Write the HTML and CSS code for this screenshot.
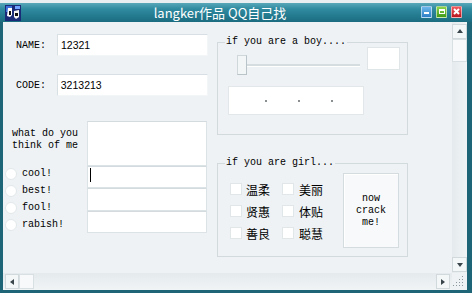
FILE: index.html
```html
<!DOCTYPE html>
<html>
<head>
<meta charset="utf-8">
<title>langker作品 QQ自己找</title>
<link rel="stylesheet" href="styles.css">
</head>
<body>
<div class="win">
  <div class="titlebar">
    <svg class="appicon" width="16" height="16" viewBox="0 0 16 16">
      <rect width="16" height="16" fill="#1a2b78"/>
      <rect x="1" y="1" width="6" height="6" fill="#3d6fd8"/>
      <path d="M3 3 L7 3 L7 10 L5 12 L2 11 Z" fill="#fff"/>
      <path d="M9 6 L14 5 L14 12 L11 14 L9 12 Z" fill="#f4f4f4"/>
      <path d="M4 6 L6 6 L6 10 L4 10 Z M10 8 L13 8 L13 11 L10 11 Z" fill="#111"/>
      <rect x="10" y="1" width="5" height="3" fill="#6fa3ff"/>
    </svg>
    <span class="title">langker作品 QQ自己找</span>
    <div class="wbtns">
      <span class="wb wb-min"><i></i></span>
      <span class="wb wb-max"><i></i></span>
      <span class="wb wb-close">
        <svg width="7" height="7" viewBox="0 0 7 7"><path d="M1 1 L6 6 M6 1 L1 6" stroke="#fff" stroke-width="2"/></svg>
      </span>
    </div>
  </div>

  <div class="frame">
    <div class="client">
      <div class="form">

        <div class="left">
          <div class="field field-name">
            <span class="lbl">NAME:</span>
            <div class="txt txt-name">12321</div>
          </div>
          <div class="field field-code">
            <span class="lbl">CODE:</span>
            <div class="txt txt-code">3213213</div>
          </div>

          <div class="lower">
            <div class="opts">
              <div class="ask">what do you<br>think of me</div>
              <div class="radio"><span class="dot"></span>cool!</div>
              <div class="radio"><span class="dot"></span>best!</div>
              <div class="radio"><span class="dot"></span>fool!</div>
              <div class="radio"><span class="dot"></span>rabish!</div>
            </div>
            <div class="boxes">
              <div class="box box-big"></div>
              <div class="box"><span class="caret"></span></div>
              <div class="box box-mid"></div>
              <div class="box"></div>
            </div>
          </div>
        </div>

        <div class="right">
          <div class="group group-boy">
            <span class="legend">if you are a boy....</span>
            <div class="boy-row">
              <div class="slider">
                <span class="thumb"></span>
                <span class="track"></span>
              </div>
              <div class="smallbox"></div>
            </div>
            <div class="display">
              <span class="pt"></span><span class="pt"></span><span class="pt"></span>
            </div>
          </div>

          <div class="group group-girl">
            <span class="legend">if you are girl...</span>
            <div class="girl-row">
              <div class="checks">
                <div class="chk"><span class="sq"></span>温柔</div>
                <div class="chk"><span class="sq"></span>美丽</div>
                <div class="chk"><span class="sq"></span>贤惠</div>
                <div class="chk"><span class="sq"></span>体贴</div>
                <div class="chk"><span class="sq"></span>善良</div>
                <div class="chk"><span class="sq"></span>聪慧</div>
              </div>
              <div class="crack">now<br>crack<br>me!</div>
            </div>
          </div>
        </div>

      </div>

      <div class="vscroll">
        <span class="sbtn"><i class="arr arr-up"></i></span>
        <span class="vthumb"></span>
        <span class="sbtn sbtn-down"><i class="arr arr-down"></i></span>
      </div>
      <div class="hscroll">
        <span class="sbtn"><i class="arr arr-left"></i></span>
        <span class="hthumb"></span>
        <span class="sbtn sbtn-right"><i class="arr arr-right"></i></span>
      </div>
      <div class="grip">
        <svg width="12" height="12" viewBox="0 0 12 12" fill="#8b979c">
          <rect x="9" y="1" width="1" height="1"/>
          <rect x="6" y="4" width="1" height="1"/><rect x="9" y="4" width="1" height="1"/>
          <rect x="3" y="7" width="1" height="1"/><rect x="6" y="7" width="1" height="1"/><rect x="9" y="7" width="1" height="1"/>
          <rect x="0" y="10" width="1" height="1"/><rect x="3" y="10" width="1" height="1"/><rect x="6" y="10" width="1" height="1"/><rect x="9" y="10" width="1" height="1"/>
        </svg>
      </div>
    </div>
  </div>
</div>
</body>
</html>
```

FILE: styles.css
```css
*{ margin:0; padding:0; box-sizing:border-box;}
body{ background:#eef2f4; font-family:"Liberation Mono", monospace; font-size:10px; color:#000;}

.win{ width:472px; height:293px; display:flex; flex-direction:column; overflow:hidden;}

/* title bar */
.titlebar{ height:22px; display:flex; align-items:center; padding:3px 10px 0 5px;
  background:linear-gradient(to bottom, #e9eef0 0, #e9eef0 3px, #58a7b8 3px, #2f8aa0 9px, #237a8f 16px, #1c6c80 22px);}
.appicon{ display:block; flex:none;}
.title{ flex:1; text-align:center; color:#fff; font-family:"Noto Sans CJK SC", sans-serif; font-size:13px; line-height:16px; padding-right:2px;}
.wbtns{ display:flex; gap:4px; margin-top:-2px;}
.wb{ width:11px; height:12px; display:flex; align-items:center; justify-content:center; border:1px solid rgba(255,255,255,.55); border-radius:1px;}
.wb-min{ background:linear-gradient(#6cb7ea, #2d7fc6);}
.wb-min i{ width:5px; height:2px; background:#fff; margin-top:3px;}
.wb-max{ background:linear-gradient(#8ed44c, #3f9a18);}
.wb-max i{ width:6px; height:5px; border:1px solid #fff; border-top-width:2px;}
.wb-close{ background:linear-gradient(#ef5a5f, #b8161e);}
.wb-close svg{ display:block;}

/* window frame */
.frame{ flex:1; background:#1d6577; padding:0 5px 3px 3px; display:flex;}
.client{ flex:1; background:#eef2f4; display:grid; grid-template-columns:1fr 15px; grid-template-rows:1fr 17px;}

.form{ display:flex;}

/* left column */
.left{ width:205px; display:flex; flex-direction:column;}
.field{ display:flex; align-items:center; padding-left:13px;}
.field-name{ margin-top:12px;}
.field-code{ margin-top:18px;}
.lbl{ width:41px;}
.txt{ height:22px; background:#fff; border:1px solid #d9e0e3; border-right-color:#f3f6f7; border-bottom-color:#f3f6f7;
  font-family:"Liberation Sans", sans-serif; font-size:10.5px; line-height:20px; padding-left:3px;}
.txt-name{ width:151px;}
.txt-code{ width:152px;}

.lower{ margin-top:25px; display:flex;}
.opts{ width:84px;}
.ask{ margin-top:7px; padding-left:9px; line-height:12px;}
.radio{ height:17px; display:flex; align-items:center;}
.ask + .radio{ margin-top:13px;}
.dot{ width:12px; height:12px; border-radius:50%; background:#fff; border:1px solid #e2e8ea; margin:0 5px 0 2px;}

.boxes{ width:120px; display:flex; flex-direction:column;}
.box{ height:22px; background:#fff; border:1px solid #dce3e6; border-top-color:#d3dbdf; position:relative;}
.box-big{ height:45px;}
.box-mid{ height:23px;}
.caret{ position:absolute; left:2px; top:1px; width:1px; height:14px; background:#000;}

/* right column */
.right{ width:191px; margin-left:9px;}
.group{ border:1px solid #d3dadd; display:flex; flex-direction:column; align-items:flex-start;}
.legend{ margin:-7px 0 0 7px; padding:0 1px; line-height:12px; background:#eef2f4;}
.group-boy{ margin-top:20px; height:93px;}
.group-girl{ margin-top:28px; height:94px;}

.boy-row{ display:flex; margin-top:-1px;}
.slider{ display:flex; align-items:center; margin:8px 0 0 19px; height:20px;}
.thumb{ width:10px; height:20px; background:#f3f6f7; border:1px solid #cfd7db; border-right-color:#b9c4c9; border-bottom-color:#b9c4c9;}
.track{ width:113px; height:3px; background:#d6dde0; border-bottom:1px solid #fff;}
.smallbox{ width:33px; height:23px; margin-left:7px; background:#fff; border:1px solid #e0e6e8;}
.display{ width:136px; height:29px; margin:11px 0 0 10px; background:#fff; border:1px solid #e2e8ea;
  display:flex; align-items:center; padding-left:36px; gap:31px;}
.pt{ width:2px; height:2px; background:#8a8f92;}

.girl-row{ display:flex; width:100%;}
.checks{ margin:9px 0 0 12px; display:grid; grid-template-columns:52px auto; grid-auto-rows:22px;}
.chk{ display:flex; align-items:center; font-family:"Noto Sans CJK SC", sans-serif; font-size:12px;}
.sq{ width:12px; height:12px; background:#fff; border:1px solid #e1e7e9; margin-right:4px;}
.chk:nth-child(2n) .sq{ margin-right:5px;}
.crack{ margin:4px 8px 0 auto; width:56px; height:75px; background:#f7f9fa; border:1px solid #d5dcdf;
  box-shadow:inset 1px 1px 0 #fff; display:flex; align-items:center; justify-content:center; text-align:center; line-height:12px;}

/* scrollbars */
.vscroll{ background:linear-gradient(to right, #e4eaed, #f1f4f5); display:flex; flex-direction:column; padding-top:2px;}
.hscroll{ background:linear-gradient(to bottom, #e4eaed, #f1f4f5); display:flex; align-items:center; padding-left:2px;}
.sbtn{ width:15px; height:15px; background:#f4f7f8; border:1px solid #d1d9dc; display:flex; align-items:center; justify-content:center;}
.hscroll .sbtn{ width:14px;}
.sbtn-down{ margin-top:auto; margin-bottom:1px;}
.sbtn-right{ margin-left:auto; margin-right:2px;}
.vthumb{ height:23px; background:#f7f9fa; border:1px solid #d9e0e3;}
.hthumb{ width:15px; height:15px; background:#f7f9fa; border:1px solid #d9e0e3;}
.arr{ width:0; height:0; border:3px solid transparent;}
.arr-up{ border-bottom:4px solid #39454a; border-top-width:0; margin-top:-1px;}
.arr-down{ border-top:4px solid #39454a; border-bottom-width:0;}
.arr-left{ border-right:4px solid #39454a; border-left-width:0;}
.arr-right{ border-left:4px solid #39454a; border-right-width:0;}
.grip{ background:#eef2f4; display:flex; align-items:flex-end; justify-content:flex-end; padding:0 2px 3px 0;}
.grip svg{ display:block;}
```
